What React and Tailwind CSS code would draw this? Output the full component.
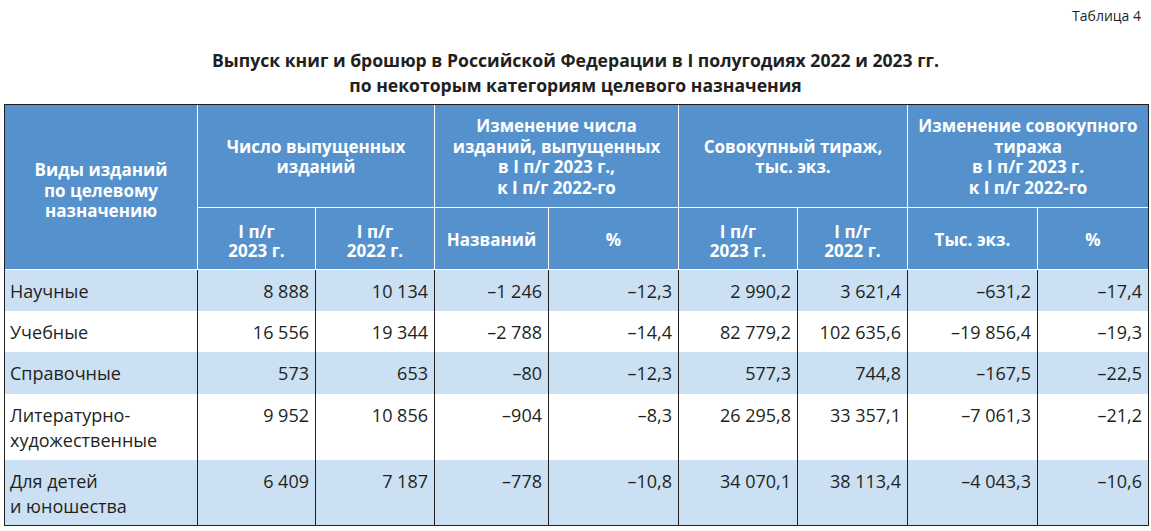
const font = { fontFamily: '"Open Sans", "Noto Sans", sans-serif' };

const rows = [
  { name: ["Научные"], vals: ["8 888", "10 134", "–1 246", "–12,3", "2 990,2", "3 621,4", "–631,2", "–17,4"], h: "h-[41px]" },
  { name: ["Учебные"], vals: ["16 556", "19 344", "–2 788", "–14,4", "82 779,2", "102 635,6", "–19 856,4", "–19,3"], h: "h-[41px]" },
  { name: ["Справочные"], vals: ["573", "653", "–80", "–12,3", "577,3", "744,8", "–167,5", "–22,5"], h: "h-[42px]" },
  { name: ["Литературно-", "художественные"], vals: ["9 952", "10 856", "–904", "–8,3", "26 295,8", "33 357,1", "–7 061,3", "–21,2"], h: "h-[66px]" },
  { name: ["Для детей", "и юношества"], vals: ["6 409", "7 187", "–778", "–10,8", "34 070,1", "38 113,4", "–4 043,3", "–10,6"], h: "h-[65px]" },
];

const widths = [193, 118, 119, 114, 130, 119, 110, 130, 110];

function Lines({ items }) {
  return items.map((t, i) => (
    <span key={i} className="block">
      {t}
    </span>
  ));
}

export default function App() {
  return (
    <div className="w-[1151px] h-[531px] bg-white text-[#231f20] overflow-hidden" style={font}>
      <div className="flex justify-end pr-[10px] pt-[6px] text-[14px] leading-[20px]">Таблица 4</div>
      <div className="mt-[22px] text-center font-bold text-[17.6px] leading-[25px]">
        <p>Выпуск книг и брошюр в Российской Федерации в I полугодиях 2022 и 2023 гг.</p>
        <p>по некоторым категориям целевого назначения</p>
      </div>
      <div className="ml-[4px] mt-[6px] w-[1145px] border border-[#231f20]">
        <table className="w-full table-fixed border-separate border-spacing-0">
          <colgroup>
            {widths.map((w, i) => (
              <col key={i} style={{ width: w }} />
            ))}
          </colgroup>
          <thead className="bg-[#5592cd] text-white font-bold text-[17px] leading-[20.5px]">
            <tr className="h-[103px]">
              <th rowSpan={2} className="border-r border-b border-white align-middle pt-[8px]">
                <Lines items={["Виды изданий", "по целевому", "назначению"]} />
              </th>
              <th colSpan={2} className="border-r border-b border-white align-middle pt-[2px]">
                <Lines items={["Число выпущенных", "изданий"]} />
              </th>
              <th colSpan={2} className="border-r border-b border-white align-middle pt-[2px]">
                <Lines items={["Изменение числа", "изданий, выпущенных", "в I п/г 2023 г.,", "к I п/г 2022-го"]} />
              </th>
              <th colSpan={2} className="border-r border-b border-white align-middle pt-[2px]">
                <Lines items={["Совокупный тираж,", "тыс. экз."]} />
              </th>
              <th colSpan={2} className="border-b border-white align-middle pt-[2px]">
                <Lines items={["Изменение совокупного", "тиража", "в I п/г 2023 г.", "к I п/г 2022-го"]} />
              </th>
            </tr>
            <tr className="h-[62px] leading-[19px]">
              <th className="border-r border-b border-white pt-[4px]">
                <Lines items={["I п/г", "2023 г."]} />
              </th>
              <th className="border-r border-b border-white pt-[4px]">
                <Lines items={["I п/г", "2022 г."]} />
              </th>
              <th className="border-r border-b border-white pt-[2px]">Названий</th>
              <th className="border-r border-b border-white pt-[2px]">%</th>
              <th className="border-r border-b border-white pt-[4px]">
                <Lines items={["I п/г", "2023 г."]} />
              </th>
              <th className="border-r border-b border-white pt-[4px]">
                <Lines items={["I п/г", "2022 г."]} />
              </th>
              <th className="border-r border-b border-white pt-[2px]">Тыс. экз.</th>
              <th className="border-b border-white pt-[2px]">%</th>
            </tr>
          </thead>
          <tbody className="text-[18px] leading-[25px]">
            {rows.map((r, ri) => (
              <tr key={ri} className={`${r.h} ${ri % 2 === 0 ? "bg-[#cbe0f3]" : "bg-white"}`}>
                <td className="align-top pt-[9px] pl-[5px] border-r border-[#231f20]">
                  <Lines items={r.name} />
                </td>
                {r.vals.map((v, vi) => (
                  <td
                    key={vi}
                    className={`align-top pt-[9px] pr-[6px] text-right whitespace-nowrap ${vi < 7 ? "border-r border-[#231f20]" : ""}`}
                  >
                    {v.replace(/ /g, "\u00a0")}
                  </td>
                ))}
              </tr>
            ))}
          </tbody>
        </table>
      </div>
    </div>
  );
}
